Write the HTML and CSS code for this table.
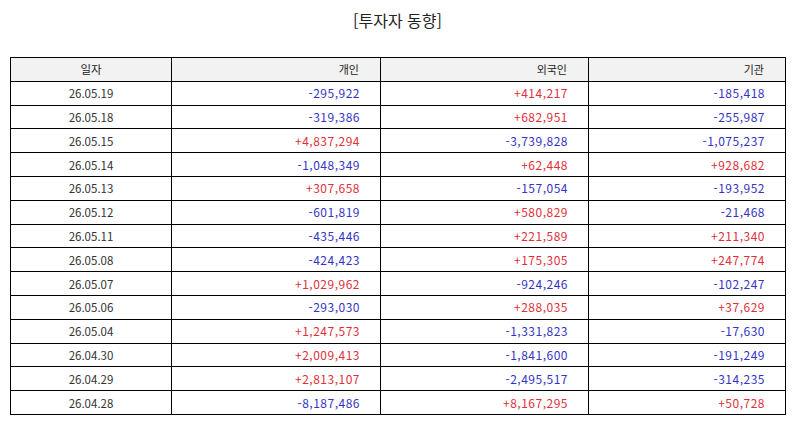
FILE: index.html
```html
<!DOCTYPE html>
<html lang="ko">
<head>
<meta charset="utf-8">
<link rel="stylesheet" href="styles.css">
</head>
<body>
<div class="page">
  <h1 class="title">[투자자 동향]</h1>
  <table class="grid">
    <colgroup>
      <col class="c-date"><col class="c-ind"><col class="c-for"><col class="c-inst">
    </colgroup>
    <thead>
      <tr><th class="date">일자</th><th>개인</th><th>외국인</th><th>기관</th></tr>
    </thead>
    <tbody>
      <tr><td class="date">26.05.19</td><td class="dn">-295,922</td><td class="up">+414,217</td><td class="dn">-185,418</td></tr>
      <tr><td class="date">26.05.18</td><td class="dn">-319,386</td><td class="up">+682,951</td><td class="dn">-255,987</td></tr>
      <tr><td class="date">26.05.15</td><td class="up">+4,837,294</td><td class="dn">-3,739,828</td><td class="dn">-1,075,237</td></tr>
      <tr><td class="date">26.05.14</td><td class="dn">-1,048,349</td><td class="up">+62,448</td><td class="up">+928,682</td></tr>
      <tr><td class="date">26.05.13</td><td class="up">+307,658</td><td class="dn">-157,054</td><td class="dn">-193,952</td></tr>
      <tr><td class="date">26.05.12</td><td class="dn">-601,819</td><td class="up">+580,829</td><td class="dn">-21,468</td></tr>
      <tr><td class="date">26.05.11</td><td class="dn">-435,446</td><td class="up">+221,589</td><td class="up">+211,340</td></tr>
      <tr><td class="date">26.05.08</td><td class="dn">-424,423</td><td class="up">+175,305</td><td class="up">+247,774</td></tr>
      <tr><td class="date">26.05.07</td><td class="up">+1,029,962</td><td class="dn">-924,246</td><td class="dn">-102,247</td></tr>
      <tr><td class="date">26.05.06</td><td class="dn">-293,030</td><td class="up">+288,035</td><td class="up">+37,629</td></tr>
      <tr><td class="date">26.05.04</td><td class="up">+1,247,573</td><td class="dn">-1,331,823</td><td class="dn">-17,630</td></tr>
      <tr><td class="date">26.04.30</td><td class="up">+2,009,413</td><td class="dn">-1,841,600</td><td class="dn">-191,249</td></tr>
      <tr><td class="date">26.04.29</td><td class="up">+2,813,107</td><td class="dn">-2,495,517</td><td class="dn">-314,235</td></tr>
      <tr><td class="date">26.04.28</td><td class="dn">-8,187,486</td><td class="up">+8,167,295</td><td class="up">+50,728</td></tr>
    </tbody>
  </table>
</div>
</body>
</html>
```
FILE: styles.css
```css
html, body {
  margin: 0;
  padding: 0;
  background: #ffffff;
}
body {
  font-family: "Noto Sans CJK KR", "Noto Sans", sans-serif;
  color: #333333;
}
.page {
  padding: 0 9px 0 10px;
}
.title {
  margin: 0;
  padding-top: 9px;
  height: 57px;
  box-sizing: border-box;
  text-align: center;
  font-size: 16px;
  font-weight: normal;
  line-height: 22px;
  color: #222222;
}
.grid {
  width: 775px;
  border-collapse: collapse;
  table-layout: fixed;
  font-size: 12px;
}
.c-date { width: 161px; }
.c-ind { width: 209px; }
.c-for { width: 208px; }
.c-inst { width: 197px; }
.grid th, .grid td {
  border: 1px solid #000000;
  height: 22.8px;
  padding: 0 20px 0 4px;
  text-align: right;
  font-weight: normal;
  line-height: 14px;
  letter-spacing: 0.5px;
}
.grid th {
  background: #f2f2f2;
  color: #222222;
  font-size: 11px;
  letter-spacing: 0;
  padding-right: 21px;
}
.grid .date {
  text-align: center;
  padding: 0 4px;
  font-size: 11.5px;
  letter-spacing: 0;
}
.up { color: #e0303a; }
.dn { color: #3434c4; }
```
